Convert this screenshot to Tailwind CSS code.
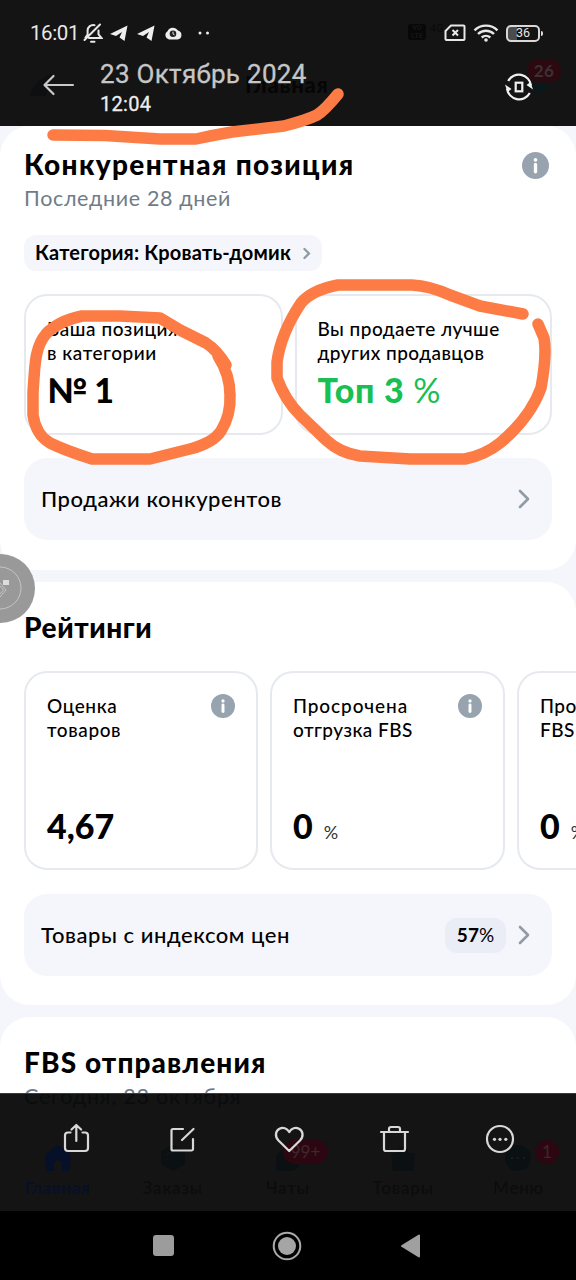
<!DOCTYPE html>
<html lang="ru">
<head>
<meta charset="utf-8">
<title>Конкурентная позиция</title>
<script src="https://cdn.jsdelivr.net/npm/@tailwindcss/browser@4"></script>
</head>
<body class="bg-black font-['Lato','Noto_Sans',sans-serif] text-black">
<svg class="hidden">
  <symbol id="info" viewBox="0 0 26 26"><circle cx="13" cy="13" r="13" fill="#98a3b0"/><circle cx="13" cy="7.500" r="1.800" fill="#fff"/><path d="M13 12v7" stroke="#fff" stroke-width="3.200" stroke-linecap="round"/></symbol>
  <symbol id="chev" viewBox="0 0 12 20"><path d="M2 2l8 8-8 8" fill="none" stroke="#909ba5" stroke-width="2.600" stroke-linecap="round" stroke-linejoin="round"/></symbol>
  <symbol id="chev-bold" viewBox="0 0 8 14"><path d="M1.500 3l4.500 4.500-4.500 4.500" fill="none" stroke="#909ba5" stroke-width="2.400" stroke-linecap="round" stroke-linejoin="round"/></symbol>
  <symbol id="plane" viewBox="0 0 18 17"><path d="M0 9L17.500 .5 14.500 16 9.500 12.500 12 7 6 11z" fill="#eee"/></symbol>
</svg>
<div class="relative flex h-[1280px] w-[576px] flex-col overflow-hidden bg-[#f5f6fb]">

  <header class="relative h-[126px] shrink-0 bg-[#141414] font-['Roboto',sans-serif] text-[#e8e8e8]">
    <span class="absolute left-[245px] top-[71px] font-['Lato'] text-[22px] font-black leading-7 tracking-[0.7px] text-[#060606]">Главная</span>
    <svg class="absolute left-[28px] top-[72px]" width="26" height="26"><path d="M2 24Q6 8 24 2L18 24z" fill="#0d0f10"/></svg>
    <div class="absolute left-[408px] top-[24px] flex items-start gap-1 text-[#0a0a0a]">
      <span class="flex h-4 w-[18px] flex-col items-center rounded-[3px] bg-[#080808] text-[7px] font-bold leading-[8px] text-[#171717]"><span>VO</span><span>LTE</span></span>
      <span class="text-[11px] leading-[9px]">4G</span>
    </div>
    <span class="absolute left-[527px] top-[59px] flex h-[23px] w-[34px] items-center justify-center rounded-full bg-[#2c0911] font-['Lato'] text-[17px] font-bold tracking-wide text-[#3b3234]">26</span>
    <span class="absolute left-[532px] top-[84px] h-[9px] w-[15px] rounded-full bg-[#0b1719]"></span>

    <div class="relative flex h-[66px] items-center pl-[30px]">
      <span class="w-[49px] text-[20.500px] leading-none tracking-[-0.4px]">16:01</span>
      <svg class="ml-[4px]" width="20" height="22" fill="none" stroke="#e8e8e8" stroke-width="2" stroke-linecap="round"><path d="M6 16H18.500L15.500 12.500V8.500M11.500 3.200C7.500 2.500 4.600 5.300 4.600 8.500V12.500L2.500 15.500M8 19.700h3.500M1.500 18L17 2.500"/></svg>
      <svg class="ml-[7px]" width="18" height="17"><use href="#plane"/></svg>
      <svg class="ml-[9px]" width="18" height="17"><use href="#plane"/></svg>
      <svg class="ml-[9px]" width="18" height="14"><path d="M5 13.500a4.500 4.500 0 0 1-1.500-8.200A6 6 0 0 1 14 4.500a4.600 4.600 0 0 1-.5 9z" fill="#eee"/><circle cx="9" cy="7.700" r="3.300" fill="#222"/><path d="M9 5.700v2.300l1.500.8" stroke="#ddd" stroke-width="1" fill="none"/></svg>
      <svg class="ml-[16px]" width="14" height="4"><circle cx="2" cy="2" r="1.500" fill="#eee"/><circle cx="9.500" cy="2" r="1.500" fill="#eee"/></svg>
      <svg class="ml-auto" width="22" height="18" fill="none" stroke="#e8e8e8" stroke-width="2"><path d="M7 1.500H19.500a1 1 0 0 1 1 1V15a1 1 0 0 1-1 1H2.500a1 1 0 0 1-1-1V7z" stroke-linejoin="round"/><path d="M8.500 6l5.500 5.500M14 6l-5.500 5.500"/></svg>
      <svg class="ml-[7px]" width="26" height="18" fill="none" stroke="#e8e8e8" stroke-width="2.400"><path d="M1.500 6.300a16.500 16.500 0 0 1 23 0M5 10a11.500 11.500 0 0 1 16 0M8.700 13.500a6.500 6.500 0 0 1 8.600 0"/><circle cx="13" cy="16" r="1.800" fill="#e8e8e8" stroke="none"/></svg>
      <div class="ml-[7px] flex h-[17px] w-[34px] items-center justify-center rounded-[5px] border-2 border-[#d8d8d8] bg-linear-to-r from-[#4c4c4c] from-30% to-transparent to-30% text-[12.500px] leading-none">36</div>
      <span class="ml-[1px] mr-[33px] h-[5px] w-[2px] rounded-r bg-[#ddd]"></span>
    </div>
    <div class="relative flex h-[60px] items-start pl-[42px]">
      <svg class="mt-[8px]" width="34" height="22" fill="none" stroke="#c9c9c9" stroke-width="2.200" stroke-linecap="round" stroke-linejoin="round"><path d="M31 11H2.500M11.500 2L2.500 11l9 9"/></svg>
      <div class="ml-[24px] -mt-[7px]">
        <div class="text-[26px] leading-[30px] tracking-[0.3px] text-[#c6c6c6] [-webkit-text-stroke:0.3px_#c6c6c6]">23 Октябрь 2024</div>
        <div class="mt-[5px] text-[20px] leading-[20px] tracking-[0.3px] text-[#ececec] [-webkit-text-stroke:0.3px_#ececec]">12:04</div>
      </div>
      <svg class="ml-auto mr-[42px] mt-[6px]" width="30" height="30" fill="none" stroke="#f0f0f0" stroke-width="2.200"><path d="M4.200 9A12.200 12.200 0 0 1 27 13.500M25.800 21A12.200 12.200 0 0 1 3 16.500"/><path d="M1 12.500L7.500 17 3.500 20zM29 17.500L22.500 13 26.500 10z" fill="#f0f0f0" stroke="none"/><rect x="11.700" y="10.700" width="6.600" height="8.600"/></svg>
    </div>
  </header>

  <main class="flex flex-col gap-3">
    <section class="h-[444px] rounded-[30px] bg-white px-6 pt-[20px]">
      <div class="flex items-start justify-between pr-[3px]">
        <h1 class="text-[28px] font-black leading-9 tracking-[1.35px] whitespace-nowrap">Конкурентная позиция</h1>
        <svg class="mt-[6px]" width="27" height="27"><use href="#info"/></svg>
      </div>
      <p class="text-[21.500px] leading-[32px] tracking-[0.65px] text-[#6f7c88]">Последние 28 дней</p>
      <div class="mt-[21px] flex h-[36px] w-[298px] items-center rounded-[12px] bg-[#f5f6fb] pl-[11px]">
        <span class="w-[268px] -translate-y-px whitespace-nowrap text-[20px] font-bold tracking-[0.2px]">Категория: Кровать-домик</span>
        <svg width="8" height="14"><use href="#chev-bold"/></svg>
      </div>
      <div class="mt-[23px] flex gap-3">
        <div class="h-[141px] w-[259px] rounded-[23px] border-2 border-[#e6eaee] pl-[21px] pt-[21px]">
          <p class="whitespace-nowrap text-[19px] font-medium leading-6 tracking-[0.55px]">Ваша позиция<br>в категории</p>
          <p class="mt-[7px] text-[34px] font-black leading-[36px] tracking-[-0.6px]">№ 1</p>
        </div>
        <div class="h-[141px] w-[258px] rounded-[23px] border-2 border-[#e6eaee] pl-[21px] pt-[21px]">
          <p class="whitespace-nowrap text-[19px] font-medium leading-6 tracking-[0.45px]">Вы продаете лучше<br>других продавцов</p>
          <p class="mt-[7px] whitespace-nowrap text-[34px] font-black leading-[36px] tracking-[0.7px] text-[#19bf52]">Топ 3 <span class="font-normal">%</span></p>
        </div>
      </div>
      <div class="mt-[23px] flex h-[82px] items-center justify-between rounded-[23px] bg-[#f5f6fb] pl-[17px] pr-[22px]">
        <span class="-translate-y-px text-[22px] font-medium tracking-[0.55px]">Продажи конкурентов</span>
        <svg width="12" height="20"><use href="#chev"/></svg>
      </div>
    </section>

    <section class="h-[423px] rounded-[30px] bg-white pl-6 pt-[27px]">
      <h2 class="text-[28px] font-black leading-9 tracking-[0.6px]">Рейтинги</h2>
      <div class="mt-[26px] flex gap-3 overflow-hidden">
        <div class="flex h-[199px] w-[234px] shrink-0 flex-col justify-between rounded-[23px] border-2 border-[#e6eaee] px-[21px] pb-[24px] pt-[21px]">
          <div class="flex items-start justify-between"><p class="text-[19px] font-medium leading-6 tracking-[0.6px]">Оценка<br>товаров</p><svg width="24" height="24"><use href="#info"/></svg></div>
          <p class="text-[34px] font-black leading-[36px]">4,67</p>
        </div>
        <div class="flex h-[199px] w-[235px] shrink-0 flex-col justify-between rounded-[23px] border-2 border-[#e6eaee] px-[21px] pb-[24px] pt-[21px]">
          <div class="flex items-start justify-between"><p class="whitespace-nowrap text-[19px] font-medium leading-6 tracking-[0.45px]"><span class="tracking-[0.9px]">Просрочена</span><br>отгрузка FBS</p><svg width="24" height="24"><use href="#info"/></svg></div>
          <p class="flex h-[36px] items-baseline gap-[11px] text-[34px] font-black leading-[36px]">0 <span class="text-[18px] font-normal text-[#333]">%</span></p>
        </div>
        <div class="flex h-[199px] w-[235px] shrink-0 flex-col justify-between rounded-[23px] border-2 border-[#e6eaee] px-[21px] pb-[24px] pt-[21px]">
          <p class="whitespace-nowrap text-[19px] font-medium leading-6 tracking-[0.45px]">Просрочена<br>FBS</p>
          <p class="flex h-[36px] items-baseline gap-[11px] text-[34px] font-black leading-[36px]">0 <span class="text-[18px] font-normal text-[#333]">%</span></p>
        </div>
      </div>
      <div class="mr-6 mt-[24px] flex h-[82px] items-center rounded-[23px] bg-[#f5f6fb] pl-[17px] pr-[22px]">
        <span class="-translate-y-px text-[22px] font-medium tracking-[0.55px]">Товары с индексом цен</span>
        <span class="ml-auto mr-[12px] flex h-[35px] w-[61px] items-center justify-center rounded-[12px] bg-[#eaedf5] text-[19px]"><b>57</b>%</span>
        <svg width="12" height="20"><use href="#chev"/></svg>
      </div>
    </section>

    <section class="h-[260px] rounded-t-[30px] bg-white pl-6 pt-[27px]">
      <h2 class="text-[28px] font-black leading-9 tracking-[1.1px]">FBS отправления</h2>
      <p class="text-[21.500px] leading-[32px] tracking-[0.8px] text-[#6f7c88]">Сегодня, 23 октября</p>
    </section>
  </main>

  <div class="absolute left-[-34px] top-[554px] flex size-[69px] items-center justify-center rounded-full bg-[#999]">
    <svg width="69" height="69" fill="none" stroke="#c5c5c5"><circle cx="34" cy="34" r="21"/><path d="M34 29l6 7-6 7M34 32l3.500 4-3.500 4"/><path d="M37 26h6v5h-6z" fill="#ddd" stroke="none"/></svg>
  </div>

  <footer class="absolute inset-x-0 bottom-0 flex h-[187px] flex-col">
    <div class="relative h-[118px] border-t border-[#3c3c3c] bg-[#141414]">
      <span class="absolute left-6 top-[-14px] h-[32px] whitespace-nowrap text-[21.500px] leading-[32px] tracking-[0.8px] text-[#0a0c0e] [clip-path:inset(14px_0_0_0)]">Сегодня, 23 октября</span>
      <div class="absolute inset-x-0 top-[49px] grid grid-cols-5 text-center text-[17px] font-bold tracking-[0.2px] text-[#0b0c0d]">
        <div class="flex flex-col items-center text-[#071029]"><svg width="26" height="28"><path d="M0 15Q1 9 13 2Q25 9 26 15L24 28H17V20Q13 14 9 20V28H2z" fill="#071029"/></svg><span class="mt-[4px] tracking-[0.8px]">Главная</span></div>
        <div class="flex flex-col items-center"><svg width="26" height="28"><path d="M13 2l12 6v13l-12 7-12-7V8z" fill="#0b1012"/><path d="M6 12l7-4" stroke="#141414" stroke-width="2"/></svg><span class="mt-[4px] font-medium tracking-[0.8px]">Заказы</span></div>
        <div class="flex flex-col items-center"><svg width="26" height="28"><path d="M1 28V14Q3 7 13 7T25 17Q25 28 14 28z" fill="#0b1012"/></svg><span class="mt-[4px] font-medium tracking-[0.8px]">Чаты</span></div>
        <div class="flex flex-col items-center"><svg width="26" height="28"><path d="M1 10H25L23 28H3zM7 10Q13-4 19 10" fill="#0b1012"/></svg><span class="mt-[4px] font-medium tracking-[0.8px]">Товары</span></div>
        <div class="flex flex-col items-center"><svg width="26" height="28"><circle cx="13" cy="15" r="13" fill="#0b1012"/><path d="M6 15h14" stroke="#181c1e" stroke-width="2" stroke-dasharray="2 4"/></svg><span class="mt-[4px] font-medium tracking-[0.8px]">Меню</span></div>
      </div>
      <span class="absolute left-[283px] top-[46px] flex h-[24px] w-[45px] items-center justify-center rounded-full bg-[#2c0711] text-[17px] text-[#40272d]">99+</span>
      <span class="absolute left-[535px] top-[46px] flex size-[24px] items-center justify-center rounded-full bg-[#2c0711] text-[17px] text-[#40272d]">1</span>
      <div class="relative flex items-start pl-[61px] pt-[29px] text-[#d8d8d8]">
        <svg width="30" height="32" fill="none" stroke="currentColor" stroke-width="2.200" stroke-linecap="round" stroke-linejoin="round"><path d="M9.500 9.500H7a3 3 0 0 0-3 3V25a3 3 0 0 0 3 3H24a3 3 0 0 0 3-3V12.500a3 3 0 0 0-3-3H21.500M15.300 18V2.500M10.500 6.500L15.300 2l4.800 4.500"/></svg>
        <svg class="ml-[77px]" width="30" height="32" fill="none" stroke="currentColor" stroke-width="2.200" stroke-linecap="round" stroke-linejoin="round"><path d="M15 6H5a1.500 1.500 0 0 0-1.500 1.500V26A1.500 1.500 0 0 0 5 27.500H23.500A1.500 1.500 0 0 0 25 26V16M14 17L25.500 6"/></svg>
        <svg class="ml-[76px]" width="32" height="32" fill="none" stroke="currentColor" stroke-width="2.300" stroke-linejoin="round"><path d="M15.200 28L4.500 17.500C.5 13 1.500 8 5.500 5.800 9 4 13 5.500 15.200 9 17.500 5.500 21.500 4 25 5.800 29 8 30 13 26 17.500z"/></svg>
        <svg class="ml-[73px]" width="32" height="32" fill="none" stroke="currentColor" stroke-width="2.200" stroke-linecap="round" stroke-linejoin="round"><path d="M2 9H29M5 9V26a2 2 0 0 0 2 2H24a2 2 0 0 0 2-2V9M10 9V6a2 2 0 0 1 2-2h7a2 2 0 0 1 2 2v3"/></svg>
        <svg class="ml-[74px]" width="32" height="32" fill="none" stroke="currentColor" stroke-width="2.200"><circle cx="15" cy="16" r="13"/><g fill="currentColor" stroke="none"><circle cx="9.500" cy="16.300" r="1.600"/><circle cx="15" cy="16.300" r="1.600"/><circle cx="20.800" cy="16.300" r="1.600"/></g></svg>
      </div>
    </div>
    <nav class="flex grow items-center bg-black pl-[153px]">
      <span class="size-[21px] rounded-[3px] bg-[#9c9c9c]"></span>
      <svg class="ml-[98px]" width="30" height="30"><circle cx="15" cy="15" r="13.300" fill="none" stroke="#aaa" stroke-width="2"/><circle cx="15" cy="15" r="9" fill="#a5a5a5"/></svg>
      <svg class="ml-[98px]" width="22" height="26"><path d="M2 13L19 2.500v21z" fill="#a0a0a0" stroke="#a0a0a0" stroke-width="2" stroke-linejoin="round"/></svg>
    </nav>
  </footer>

  <svg class="pointer-events-none absolute inset-0" width="576" height="1280" fill="none" stroke="#fd7c45" stroke-width="11.500" stroke-linecap="round" stroke-linejoin="round">
    <path d="M53 135L105 135.500 160 139H196Q214 135 232 132L284 126Q307 120 317 115Q325 110 338 94"/>
    <path d="M226 365Q217 350 206 343L180 330 160 318 120 316H82Q58 321 46 334C34 348 35 368 33 392V415Q36 435 50 443Q64 450 92 459H150L190 449Q213 443 221 431Q231 415 230 395C230 382 225 367 218 356"/>
    <path d="M523 314L480 306 450 295Q430 286 412 285H338Q312 290 301 303C291 318 280 340 277 362V378Q285 400 300 415L326 440Q340 453 360 456L410 459H465Q485 455 500 443Q530 418 541 388Q547 355 544 338L538 324"/>
  </svg>
</div>
</body>
</html>
